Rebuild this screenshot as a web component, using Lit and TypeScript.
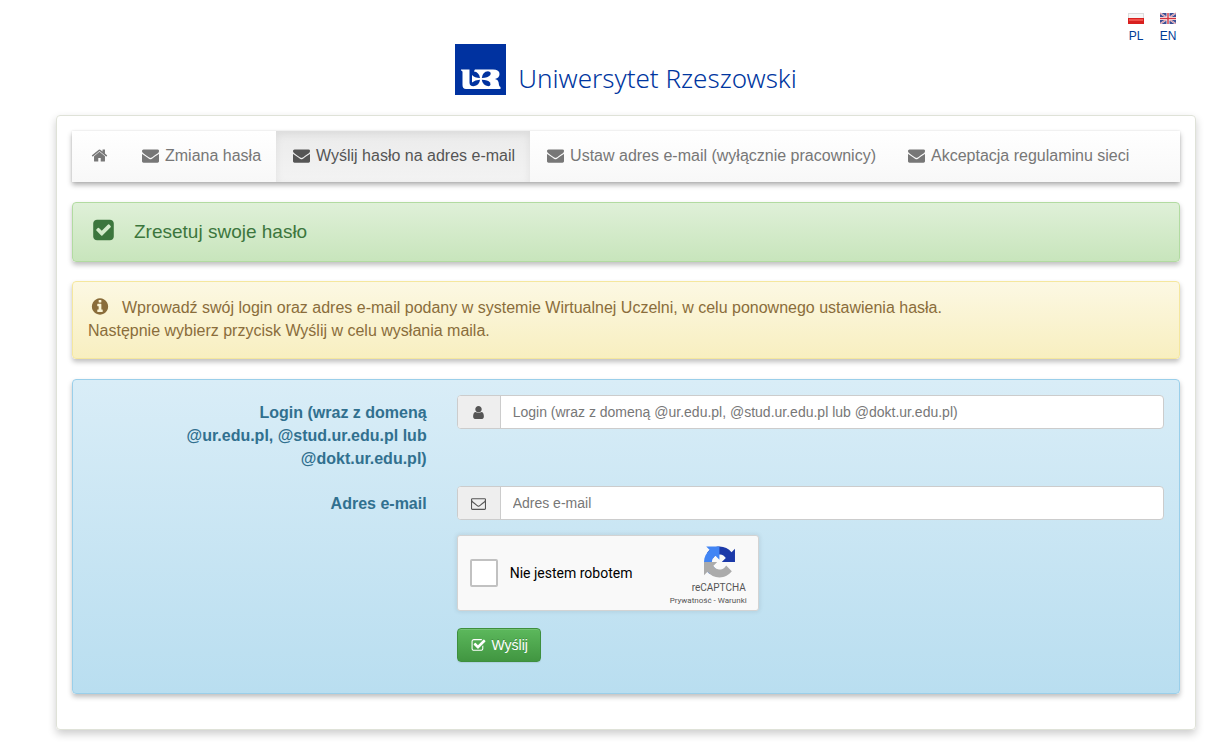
import { LitElement, html, css, svg } from "lit";
import { customElement } from "lit/decorators.js";

const ICONS: Record<string, string> = {
  home: "M1472 992v480q0 26-19 45t-45 19h-384v-384h-256v384h-384q-26 0-45-19t-19-45v-480q0-1 .5-3t.5-3l575-474 575 474q1 2 1 6zm223-69l-62 74q-8 9-21 11h-3q-13 0-21-7l-692-577-692 577q-12 8-24 7-13-2-21-11l-62-74q-8-10-7-23.5t11-21.5l719-599q32-26 76-26t76 26l244 204v-195q0-14 9-23t23-9h192q14 0 23 9t9 23v408l219 182q10 8 11 21.5t-7 23.5z",
  envelope: "M1792 710v794q0 66-47 113t-113 47h-1472q-66 0-113-47t-47-113v-794q44 49 101 87 362 246 497 345 57 42 92.5 65.5t94.5 48 110 24.5h2q51 0 110-24.5t94.5-48 92.5-65.5q170-123 498-345 57-39 100-87zm0-294q0 79-49 151t-122 123q-376 261-468 325-10 7-42.5 31t-54 38.5-52 32.5-57.5 27-50 9h-2q-23 0-50-9t-57.5-27-52-32.5-54-38.5-42.5-31q-91-64-262-182.5t-205-142.5q-62-42-117-115.5t-55-136.5q0-78 41.5-130t118.5-52h1472q65 0 112.5 47t47.5 113z",
  envelopeO: "M1664 1504v-768q-32 36-69 66-268 206-426 338-51 43-83 67t-86.5 48.5-102.5 24.5h-2q-48 0-102.5-24.5t-86.5-48.5-83-67q-158-132-426-338-37-30-69-66v768q0 13 9.5 22.5t22.5 9.5h1472q13 0 22.5-9.5t9.5-22.5zm0-1051v-24.5l-.5-13-3-12.5-5.5-9-9-7.5-14-2.5h-1472q-13 0-22.5 9.5t-9.5 22.5q0 168 147 284 193 152 401 317 6 5 35 29.5t46 37.5 44.5 31.5 50.5 27.5 43 9h2q20 0 43-9t50.5-27.5 44.5-31.5 46-37.5 35-29.5q208-165 401-317 54-43 100.5-115.5t46.5-131.5zm128-37v1088q0 66-47 113t-113 47h-1472q-66 0-113-47t-47-113v-1088q0-66 47-113t113-47h1472q66 0 113 47t47 113z",
  check: "M813 1299l614-614q19-19 19-45t-19-45l-102-102q-19-19-45-19t-45 19l-467 467-211-211q-19-19-45-19t-45 19l-102 102q-19 19-19 45t19 45l358 358q19 19 45 19t45-19zm851-883v960q0 119-84.5 203.5t-203.5 84.5h-960q-119 0-203.5-84.5t-84.5-203.5v-960q0-119 84.5-203.5t203.5-84.5h960q119 0 203.5 84.5t84.5 203.5z",
  checkO: "M1472 930v318q0 119-84.5 203.5t-203.5 84.5h-832q-119 0-203.5-84.5t-84.5-203.5v-832q0-119 84.5-203.5t203.5-84.5h832q63 0 117 25 15 7 18 23 3 17-9 29l-49 49q-10 10-23 10-3 0-9-2-23-6-45-6h-832q-66 0-113 47t-47 113v832q0 66 47 113t113 47h832q66 0 113-47t47-113v-254q0-13 9-22l64-64q10-10 23-10 6 0 12 3 20 8 20 29zm231-489l-814 814q-24 24-57 24t-57-24l-430-430q-24-24-24-57t24-57l110-110q24-24 57-24t57 24l263 263 647-647q24-24 57-24t57 24l110 110q24 24 24 57t-24 57z",
  info: "M1152 1376v-160q0-14-9-23t-23-9h-96v-512q0-14-9-23t-23-9h-320q-14 0-23 9t-9 23v160q0 14 9 23t23 9h96v320h-96q-14 0-23 9t-9 23v160q0 14 9 23t23 9h448q14 0 23-9t9-23zm-128-896v-160q0-14-9-23t-23-9h-192q-14 0-23 9t-9 23v160q0 14 9 23t23 9h192q14 0 23-9t9-23zm640 416q0 209-103 385.5t-279.5 279.5-385.5 103-385.5-103-279.5-279.5-103-385.5 103-385.5 279.5-279.5 385.5-103 385.5 103 279.5 279.5 103 385.5z",
  user: "M1536 1399q0 109-62.5 187t-150.5 78h-854q-88 0-150.5-78t-62.5-187q0-85 8.5-160.5t31.5-152 58.5-131 94-89 134.5-34.5q131 128 313 128t313-128q76 0 134.5 34.5t94 89 58.5 131 31.5 152 8.5 160.5zm-256-887q0 159-112.5 271.5t-271.5 112.5-271.5-112.5-112.5-271.5 112.5-271.5 271.5-112.5 271.5 112.5 112.5 271.5z",
};

const icon = (name: string) => html`<svg class="icon" viewBox="0 0 1792 1792" aria-hidden="true">
  ${svg`<path d=${ICONS[name]} />`}
</svg>`;

const NAV = [
  { icon: "home", text: "", active: false },
  { icon: "envelope", text: "Zmiana hasła", active: false },
  { icon: "envelope", text: "Wyślij hasło na adres e-mail", active: true },
  { icon: "envelope", text: "Ustaw adres e-mail (wyłącznie pracownicy)", active: false },
  { icon: "envelope", text: "Akceptacja regulaminu sieci", active: false },
];

@customElement("app-root")
export class AppRoot extends LitElement {
  static styles = css`
    :host {
      display: block;
      font: 16px/23px "Liberation Sans", Arial, sans-serif;
      color: #333;
      background: #fff;
      padding: 12px 22px 14px 56px;
    }
    * { box-sizing: border-box; }
    a { color: inherit; text-decoration: none; }
    .icon { display: block; fill: currentColor; }

    .langs {
      display: flex;
      justify-content: flex-end;
      gap: 16px;
      height: 32px;
      padding-right: 20px;
      font-size: 12px;
      line-height: 16px;
      color: #003c96;
    }
    .lang { width: 16px; text-align: center; }
    .flag { display: block; width: 16px; height: 12px; margin-bottom: 4px; }
    .lang span { display: flex; justify-content: center; }

    .brand {
      display: flex;
      justify-content: center;
      gap: 12px;
      height: 51px;
      margin-bottom: 20px;
    }
    .emblem { width: 51px; height: 51px; }
    .brand-name {
      padding-top: 17px;
      font: 300 26px/34px "Noto Sans", "Open Sans", sans-serif;
      color: #0036a0;
    }

    .card {
      padding: 15px 15px 35px;
      border: 1px solid #dfe2d8;
      border-radius: 4px;
      box-shadow: 0 4px 8px rgba(0, 0, 0, 0.2);
    }

    .nav {
      display: flex;
      margin-bottom: 20px;
      padding-left: 2px;
      color: #777;
      background: linear-gradient(#fff, #f8f8f8);
      box-shadow: 0 3px 5px rgba(0, 0, 0, 0.3), 0 0 2px rgba(0, 0, 0, 0.1);
    }
    .tab {
      display: flex;
      align-items: center;
      gap: 4px;
      height: 51px;
      padding: 0 15px 2px;
    }
    .tab .icon { width: 21px; height: 17px; }
    .tab.active {
      color: #555;
      background: linear-gradient(#ebebeb, #f3f3f3);
      box-shadow: inset 0 3px 9px rgba(0, 0, 0, 0.075);
    }

    .panel {
      border: 1px solid;
      border-radius: 4px;
      padding: 15px;
      margin-bottom: 20px;
      box-shadow: 0 3px 5px rgba(0, 0, 0, 0.25);
    }
    .success {
      display: flex;
      align-items: center;
      gap: 15px;
      height: 60px;
      margin-bottom: 19px;
      padding-bottom: 17px;
      font-size: 19px;
      color: #3c763d;
      background: linear-gradient(#dff0d8, #c8e5bc);
      border-color: #b2dba1;
    }
    .success h1 { margin: 0; font: inherit; }
    .success .icon { width: 31px; height: 24px; margin-bottom: 2px; }
    .warning {
      padding-top: 14px;
      padding-bottom: 16px;
      color: #8a6d3b;
      background: linear-gradient(#fcf8e3, #f8efc0);
      border-color: #f5e79e;
    }
    .warning p { margin: 0; }
    .warning .icon {
      display: inline-block;
      width: 24px;
      height: 19px;
      margin-top: -2px;
      margin-right: 10px;
      vertical-align: -3px;
    }
    .form {
      display: grid;
      grid-template-columns: repeat(12, minmax(0, 1fr));
      gap: 15px 30px;
      align-items: start;
      margin: 0;
      padding-bottom: 31px;
      color: #31708f;
      background: linear-gradient(#d9edf7, #b9def0);
      border-color: #9acfea;
    }
    .name {
      grid-column: 2 / 5;
      padding-top: 6px;
      padding-bottom: 1px;
      text-align: right;
      font-weight: bold;
    }
    .control { grid-column: 5 / 13; }
    .group {
      display: flex;
      height: 34px;
      border: 1px solid #ccc;
      border-radius: 4px;
      background: #fff;
      overflow: hidden;
    }
    .addon {
      display: flex;
      align-items: center;
      justify-content: center;
      width: 43px;
      color: #555;
      background: #eee;
      border-right: 1px solid #ccc;
    }
    .addon .icon { width: 15px; height: 15px; }
    .group input {
      flex: 1;
      min-width: 0;
      padding: 0 12px;
      border: 0;
      outline: 0;
      background: none;
      font: 14px/20px "Liberation Sans", Arial, sans-serif;
      color: #555;
    }
    .group input::placeholder { color: #777; opacity: 1; }

    .captcha {
      display: flex;
      justify-content: space-between;
      width: 302px;
      height: 76px;
      margin-bottom: 2px;
      padding: 0 11px 0 12px;
      border: 1px solid #d3d3d3;
      border-radius: 3px;
      background: #f9f9f9;
      box-shadow: 0 0 4px 1px rgba(0, 0, 0, 0.08);
      font-family: Roboto, sans-serif;
      color: #000;
    }
    .robot {
      display: flex;
      align-items: center;
      gap: 12px;
      font-size: 14px;
      line-height: 17px;
    }
    .robot input {
      appearance: none;
      width: 28px;
      height: 28px;
      margin: 0;
      border: 2px solid #c1c1c1;
      border-radius: 2px;
      background: #fff;
    }
    .badge {
      display: flex;
      flex-direction: column;
      align-items: flex-end;
      padding-top: 10px;
      color: #555;
    }
    .badge svg { width: 31px; height: 32px; margin-right: 12px; }
    .badge-name { padding: 4px 1px 0 0; font-size: 10px; line-height: 12px; }
    .terms { padding-top: 2px; font-size: 8px; line-height: 10px; }

    .send {
      display: flex;
      align-items: center;
      justify-content: center;
      gap: 5px;
      width: 84px;
      height: 34px;
      padding: 0 0 0 2px;
      border: 1px solid #3e8f3e;
      border-radius: 4px;
      color: #fff;
      background: linear-gradient(#5cb85c, #419641);
      box-shadow: inset 0 1px 0 rgba(255, 255, 255, 0.15), 0 1px 1px rgba(0, 0, 0, 0.075);
      font: 14px/20px "Liberation Sans", Arial, sans-serif;
      text-shadow: 0 -1px 0 rgba(0, 0, 0, 0.2);
    }
    .send .icon { width: 15px; height: 15px; }
    .form.panel { margin-bottom: 0; }
  `;

  render() {
    return html`
      <nav class="langs" aria-label="Język">
        <a class="lang" href="#pl">
          <svg class="flag" viewBox="0 0 16 12">
            <rect y="1" width="16" height="11" fill="#dcdcdc" />
            <rect x="1" y="2" width="14" height="5" fill="#f6f6f6" />
            <rect y="6" width="16" height="6" fill="#d8201f" />
            <rect x="1" y="7" width="14" height="2" fill="#f0504a" />
          </svg>
          <span>PL</span>
        </a>
        <a class="lang" href="#en">
          <svg class="flag" viewBox="0 0 16 12">
            <rect y="1" width="16" height="11" fill="#3d4f94" />
            <path d="M0 1L16 12M16 1L0 12" stroke="#e6e2ee" stroke-width="1.8" />
            <path d="M0 1L16 12M16 1L0 12" stroke="#d9525c" stroke-width=".6" />
            <path d="M8 1V12M0 6.5H16" stroke="#fff" stroke-width="3" />
            <path d="M8 1V12M0 6.5H16" stroke="#d3333f" stroke-width="1.4" />
          </svg>
          <span>EN</span>
        </a>
      </nav>

      <header class="brand">
        <svg class="emblem" viewBox="0 0 51 51" aria-hidden="true">
          <rect width="51" height="51" fill="#0032a0" />
          <path fill="#fff" d="M6 25.500H38Q44.500 25.500 44.500 30Q44.500 34 40 35Q43 35.500 43.500 38L44 41Q44.200 42.500 45.500 43V45H11Q7.500 45 7.500 41V28Q7.500 26.500 6 26.500Z" />
          <g fill="#0032a0">
            <path d="M14.500 25H20L19 27.500Q24 28 25 34Q19.500 34 17 31V38.500Q20 35.800 25 35.800Q24.500 41.500 18.500 42.300Q14.500 42.300 14.500 38.500Z" />
            <path d="M26.800 34Q27.500 27.800 33 27.300Q36.800 28 35.300 31Q33 34 26.800 34Z" />
            <path d="M26.800 35.800Q33 35.800 35 38.500Q36.500 41.800 33.500 42.300Q27.500 41.500 26.800 35.800Z" />
          </g>
        </svg>
        <span class="brand-name">Uniwersytet Rzeszowski</span>
      </header>

      <main class="card">
        <nav class="nav" aria-label="Menu">
          ${NAV.map(
            (t) => html`<a class="tab ${t.active ? "active" : ""}" href="#" aria-label=${t.text || "Strona główna"}>${icon(t.icon)}${t.text ? html`<span>${t.text}</span>` : ""}</a>`
          )}
        </nav>

        <section class="panel success">
          ${icon("check")}
          <h1>Zresetuj swoje hasło</h1>
        </section>

        <section class="panel warning">
          <p>${icon("info")}Wprowadź swój login oraz adres e-mail podany w systemie Wirtualnej Uczelni, w celu ponownego ustawienia hasła.<br />Następnie wybierz przycisk Wyślij w celu wysłania maila.</p>
        </section>

        <form class="panel form" @submit=${(e: Event) => e.preventDefault()}>
          <label class="name" for="login">Login (wraz z domeną @ur.edu.pl, @stud.ur.edu.pl lub @dokt.ur.edu.pl)</label>
          <div class="control group">
            <span class="addon">${icon("user")}</span>
            <input id="login" type="text" placeholder="Login (wraz z domeną @ur.edu.pl, @stud.ur.edu.pl lub @dokt.ur.edu.pl)" />
          </div>

          <label class="name" for="email">Adres e-mail</label>
          <div class="control group">
            <span class="addon">${icon("envelopeO")}</span>
            <input id="email" type="email" placeholder="Adres e-mail" />
          </div>

          <div class="control captcha">
            <label class="robot"><input type="checkbox" />Nie jestem robotem</label>
            <div class="badge">
              <svg viewBox="0 0 64 64" aria-hidden="true">
                <path fill="#1c3aa9" d="M64 31.955l-.033-1.370V4.687l-7.160 7.160C50.948 4.674 42.033.093 32.050.093c-10.400 0-19.622 4.960-25.458 12.640l11.736 11.860a15.550 15.550 0 0 1 4.754-5.334c2.050-1.600 4.952-2.906 8.968-2.906.485 0 .860.057 1.135.163 4.976.393 9.288 3.140 11.828 7.124l-8.307 8.307L64 31.953" />
                <path fill="#4285f4" d="M31.862.094l-1.370.033H4.594l7.160 7.160C4.580 13.147 0 22.060 0 32.046c0 10.400 4.960 19.622 12.640 25.458L24.500 45.768a15.550 15.550 0 0 1-5.334-4.754c-1.600-2.050-2.906-4.952-2.906-8.968 0-.485.057-.860.163-1.135.393-4.976 3.140-9.288 7.124-11.828l8.307 8.307L31.860.095" />
                <path fill="#ababab" d="M.001 32.045l.033 1.370v25.898l7.160-7.160c5.860 7.173 14.774 11.754 24.760 11.754 10.400 0 19.622-4.960 25.458-12.640l-11.736-11.860a15.550 15.550 0 0 1-4.754 5.334c-2.050 1.600-4.952 2.906-8.968 2.906-.485 0-.860-.057-1.135-.163-4.976-.393-9.288-3.140-11.828-7.124l8.307-8.307c-10.522.040-22.400.066-27.295-.005" />
              </svg>
              <span class="badge-name">reCAPTCHA</span>
              <span class="terms"><a href="#privacy">Prywatność</a> - <a href="#terms">Warunki</a></span>
            </div>
          </div>

          <div class="control">
            <button class="send" type="submit">${icon("checkO")}<span>Wyślij</span></button>
          </div>
        </form>
      </main>
    `;
  }
}
